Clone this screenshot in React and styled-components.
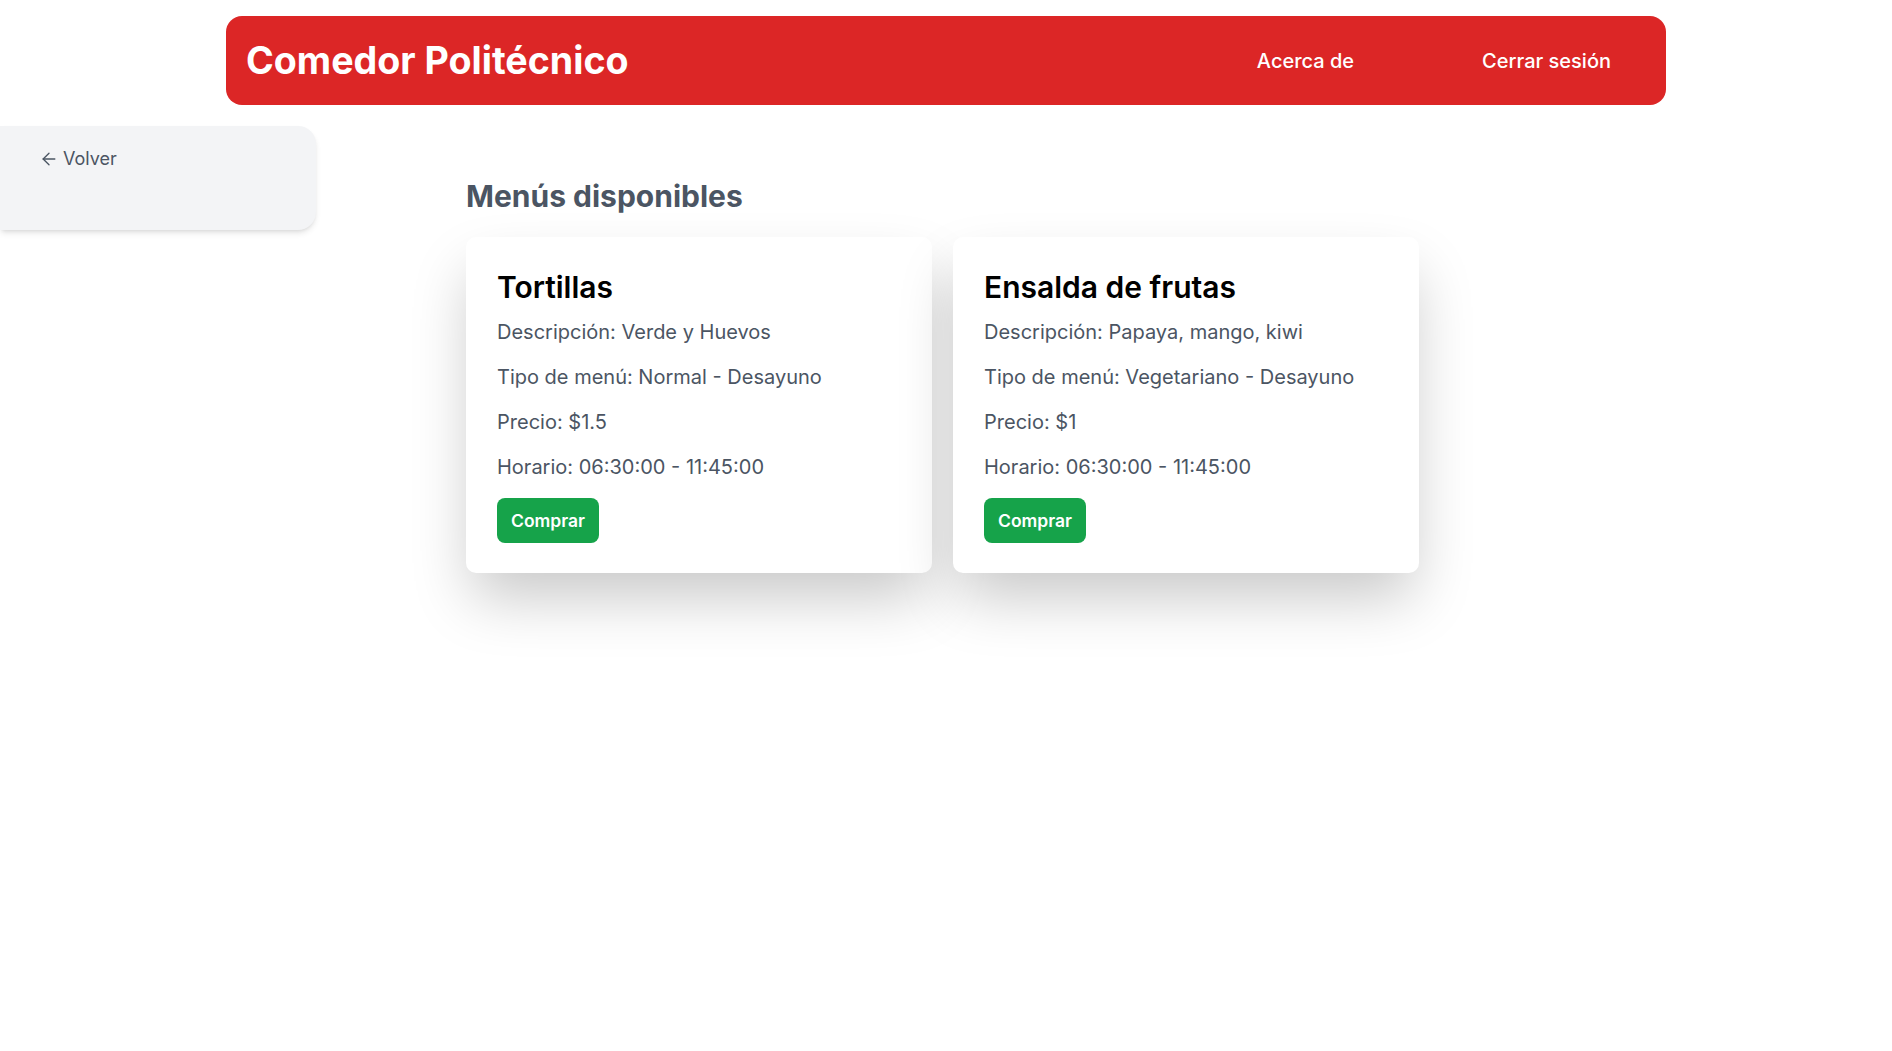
import styled, { createGlobalStyle } from 'styled-components';
import { ArrowLeft } from 'lucide-react';

const GlobalStyle = createGlobalStyle`
	* {
		box-sizing: border-box;
	}
	body {
		margin: 0;
		min-height: 100vh;
		background: #ffffff;
		font-family: Inter, "Noto Sans", "Liberation Sans", sans-serif;
		color: #111827;
	}
`;

const menus = [
	{
		id: 1,
		nombre: 'Tortillas',
		descripcion: 'Verde y Huevos',
		tipo: 'Normal',
		comida: 'Desayuno',
		precio: 1.5,
		inicio: '06:30:00',
		fin: '11:45:00',
	},
	{
		id: 2,
		nombre: 'Ensalda de frutas',
		descripcion: 'Papaya, mango, kiwi',
		tipo: 'Vegetariano',
		comida: 'Desayuno',
		precio: 1,
		inicio: '06:30:00',
		fin: '11:45:00',
	},
];

const MenuCard = ({ menu }) => (
	<Card>
		<CardTitle>{menu.nombre}</CardTitle>
		<CardLine>Descripción: {menu.descripcion}</CardLine>
		<CardLine>
			Tipo de menú: {menu.tipo} - {menu.comida}
		</CardLine>
		<CardLine>Precio: ${menu.precio}</CardLine>
		<CardLine>
			Horario: {menu.inicio} - {menu.fin}
		</CardLine>
		<BuyButton>Comprar</BuyButton>
	</Card>
);

const App = () => {
	return (
		<>
			<GlobalStyle />
			<Header>
				<Brand>Comedor Politécnico</Brand>
				<Nav>
					<NavLink href="#">Acerca de</NavLink>
					<NavLink href="#">Cerrar sesión</NavLink>
				</Nav>
			</Header>
			<Layout>
				<Sidebar>
					<BackLink href="#">
						<ArrowLeft size={20} strokeWidth={1.6} />
						Volver
					</BackLink>
				</Sidebar>
				<Main>
					<Heading>Menús disponibles</Heading>
					<CardGrid>
						{menus.map((menu) => (
							<MenuCard key={menu.id} menu={menu} />
						))}
					</CardGrid>
				</Main>
			</Layout>
		</>
	);
};

export default App;

const Header = styled.header`
	width: 1440px;
	height: 89px;
	margin: 16px auto 0;
	padding: 0 55px 0 20px;
	display: flex;
	align-items: center;
	justify-content: space-between;
	background: #dc2626;
	border-radius: 16px;
	color: #ffffff;
`;

const Brand = styled.h1`
	margin: 0;
	font-size: 37.6px;
	line-height: 40px;
	font-weight: 700;
`;

const Nav = styled.nav`
	display: flex;
	align-items: center;
	gap: 128px;
`;

const NavLink = styled.a`
	color: #ffffff;
	text-decoration: none;
	font-size: 20px;
	line-height: 28px;
	font-weight: 500;
`;

const Layout = styled.div`
	display: grid;
	grid-template-columns: 1fr 960px 1fr;
	margin-top: 21px;
`;

const Sidebar = styled.aside`
	width: 316px;
	height: 104px;
	padding: 20px 0 0 39px;
	background: #f3f4f6;
	border-radius: 0 18px 18px 0;
	box-shadow: 0 4px 6px -1px rgba(0, 0, 0, 0.1), 0 2px 4px -2px rgba(0, 0, 0, 0.1);
`;

const BackLink = styled.a`
	display: inline-flex;
	align-items: center;
	gap: 4px;
	color: #4b5563;
	text-decoration: none;
	font-size: 18px;
	line-height: 26px;
`;

const Main = styled.main`
	padding: 52px 0 160px;
`;

const Heading = styled.h2`
	margin: 0 0 23px;
	font-size: 30px;
	line-height: 36px;
	font-weight: 700;
	color: #4b5563;
`;

const CardGrid = styled.div`
	display: grid;
	grid-template-columns: repeat(2, 466px);
	gap: 21px;
	align-items: start;
`;

const Card = styled.div`
	padding: 32px 32px 30px 31px;
	background: #ffffff;
	border-radius: 10px;
	box-shadow: 0 30px 60px -6px rgba(0, 0, 0, 0.22);
`;

const CardTitle = styled.h3`
	margin: 0 0 13px;
	font-size: 30px;
	line-height: 36px;
	font-weight: 600;
	color: #000000;
`;

const CardLine = styled.p`
	margin: 0 0 17px;
	font-size: 20px;
	line-height: 28px;
	color: #4b5563;
`;

const BuyButton = styled.button`
	height: 45px;
	padding: 0 14px;
	border: none;
	border-radius: 8px;
	background: #16a34a;
	color: #ffffff;
	font-family: inherit;
	font-size: 17.5px;
	font-weight: 600;
	cursor: pointer;
`;
